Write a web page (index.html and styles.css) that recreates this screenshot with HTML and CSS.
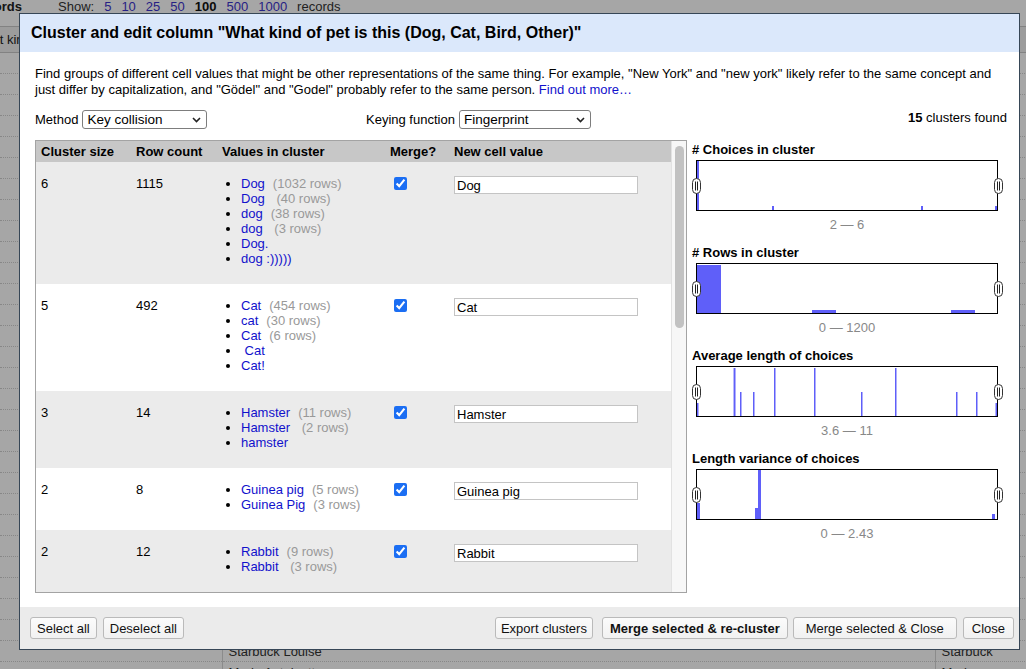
FILE: index.html
```html
<!DOCTYPE html>
<html lang="en">
<head>
<meta charset="utf-8">
<title>Cluster and edit column</title>
<link rel="stylesheet" href="styles.css">
</head>
<body>
<div class="page">
  <div class="viewbar">
    <div class="rec-count"><span>1115 records</span></div>
    <div class="show">
      <span>Show:</span><a>5</a><a>10</a><a>25</a><a>50</a><b>100</b><a>500</a><a>1000</a><span>records</span>
    </div>
  </div>
  <table class="data">
    <colgroup><col class="dc1"><col class="dc2"><col class="dc3"></colgroup>
    <thead>
      <tr><th class="first"><span>What kind of pet is this (Dog, Cat, Bird, Other)</span></th><th>Name of owner</th><th>Dad</th></tr>
    </thead>
    <tbody>
      <tr><td></td><td></td><td></td></tr>
      <tr><td></td><td></td><td></td></tr>
      <tr><td></td><td></td><td></td></tr>
      <tr><td></td><td></td><td></td></tr>
      <tr><td></td><td></td><td></td></tr>
      <tr><td></td><td></td><td></td></tr>
      <tr><td></td><td></td><td></td></tr>
      <tr><td></td><td></td><td></td></tr>
      <tr><td></td><td></td><td></td></tr>
      <tr><td></td><td></td><td></td></tr>
      <tr><td></td><td></td><td></td></tr>
      <tr><td></td><td></td><td></td></tr>
      <tr><td></td><td></td><td></td></tr>
      <tr><td></td><td></td><td></td></tr>
      <tr><td></td><td></td><td></td></tr>
      <tr><td></td><td></td><td></td></tr>
      <tr><td></td><td></td><td></td></tr>
      <tr><td></td><td></td><td></td></tr>
      <tr><td></td><td></td><td></td></tr>
      <tr><td></td><td></td><td></td></tr>
      <tr><td></td><td></td><td></td></tr>
      <tr><td></td><td></td><td></td></tr>
      <tr><td></td><td></td><td></td></tr>
      <tr><td></td><td></td><td></td></tr>
      <tr><td></td><td></td><td></td></tr>
      <tr><td></td><td></td><td></td></tr>
      <tr><td></td><td></td><td></td></tr>
      <tr><td></td><td></td><td></td></tr>
      <tr><td></td><td>Starbuck Louise</td><td>Starbuck</td></tr>
      <tr><td></td><td>Marie Antoinette</td><td>Marie</td></tr>
    </tbody>
  </table>
</div>

<div class="overlay"></div>

<div class="dialog">
  <div class="dialog-header">Cluster and edit column "What kind of pet is this (Dog, Cat, Bird, Other)"</div>

  <div class="dialog-body">
    <p class="desc">Find groups of different cell values that might be other representations of the same thing. For example, "New York" and "new york" likely refer to the same concept and just differ by capitalization, and "Gödel" and "Godel" probably refer to the same person. <a class="link">Find out more…</a></p>

    <div class="controls">
      <div class="ctl">
        <span>Method</span>
        <span class="select-wrap sel-method">
          <select><option>Key collision</option><option>Nearest neighbor</option></select>
          <svg class="chev" width="9" height="6" viewBox="0 0 9 6"><path d="M1 1 L4.5 4.5 L8 1" fill="none" stroke="#222" stroke-width="1.6"/></svg>
        </span>
      </div>
      <div class="ctl">
        <span>Keying function</span>
        <span class="select-wrap sel-key">
          <select><option>Fingerprint</option><option>ngram-fingerprint</option></select>
          <svg class="chev" width="9" height="6" viewBox="0 0 9 6"><path d="M1 1 L4.5 4.5 L8 1" fill="none" stroke="#222" stroke-width="1.6"/></svg>
        </span>
      </div>
      <div class="found"><b>15</b> clusters found</div>
    </div>

    <div class="main">
      <div class="table-wrap">
        <div class="cluster-scroll">
          <table class="clusters">
            <colgroup><col class="k1"><col class="k2"><col class="k3"><col class="k4"><col class="k5"></colgroup>
            <thead>
              <tr><th>Cluster size</th><th>Row count</th><th>Values in cluster</th><th>Merge?</th><th>New cell value</th></tr>
            </thead>
            <tbody>
              <tr class="odd">
                <td>6</td><td>1115</td>
                <td><ul class="values">
                  <li><a>Dog</a><span class="cnt">(1032 rows)</span></li>
                  <li><a>Dog </a><span class="cnt">(40 rows)</span></li>
                  <li><a>dog</a><span class="cnt">(38 rows)</span></li>
                  <li><a>dog </a><span class="cnt">(3 rows)</span></li>
                  <li><a>Dog.</a></li>
                  <li><a>dog :)))))</a></li>
                </ul></td>
                <td><input type="checkbox" class="chk" checked></td>
                <td><input type="text" class="newval" value="Dog"></td>
              </tr>
              <tr>
                <td>5</td><td>492</td>
                <td><ul class="values">
                  <li><a>Cat</a><span class="cnt">(454 rows)</span></li>
                  <li><a>cat</a><span class="cnt">(30 rows)</span></li>
                  <li><a>Cat</a><span class="cnt">(6 rows)</span></li>
                  <li><a> Cat</a></li>
                  <li><a>Cat!</a></li>
                </ul></td>
                <td><input type="checkbox" class="chk" checked></td>
                <td><input type="text" class="newval" value="Cat"></td>
              </tr>
              <tr class="odd">
                <td>3</td><td>14</td>
                <td><ul class="values">
                  <li><a>Hamster</a><span class="cnt">(11 rows)</span></li>
                  <li><a>Hamster </a><span class="cnt">(2 rows)</span></li>
                  <li><a>hamster</a></li>
                </ul></td>
                <td><input type="checkbox" class="chk" checked></td>
                <td><input type="text" class="newval" value="Hamster"></td>
              </tr>
              <tr>
                <td>2</td><td>8</td>
                <td><ul class="values">
                  <li><a>Guinea pig</a><span class="cnt">(5 rows)</span></li>
                  <li><a>Guinea Pig</a><span class="cnt">(3 rows)</span></li>
                </ul></td>
                <td><input type="checkbox" class="chk" checked></td>
                <td><input type="text" class="newval" value="Guinea pig"></td>
              </tr>
              <tr class="odd">
                <td>2</td><td>12</td>
                <td><ul class="values">
                  <li><a>Rabbit</a><span class="cnt">(9 rows)</span></li>
                  <li><a>Rabbit </a><span class="cnt">(3 rows)</span></li>
                </ul></td>
                <td><input type="checkbox" class="chk" checked></td>
                <td><input type="text" class="newval" value="Rabbit"></td>
              </tr>
              <tr>
                <td>2</td><td>7</td>
                <td><ul class="values">
                  <li><a>Bird</a><span class="cnt">(5 rows)</span></li>
                  <li><a>bird</a><span class="cnt">(2 rows)</span></li>
                </ul></td>
                <td><input type="checkbox" class="chk" checked></td>
                <td><input type="text" class="newval" value="Bird"></td>
              </tr>
              <tr class="odd">
                <td>2</td><td>4</td>
                <td><ul class="values">
                  <li><a>Fish</a><span class="cnt">(3 rows)</span></li>
                  <li><a>fish</a><span class="cnt">(1 rows)</span></li>
                </ul></td>
                <td><input type="checkbox" class="chk" checked></td>
                <td><input type="text" class="newval" value="Fish"></td>
              </tr>
              <tr>
                <td>2</td><td>3</td>
                <td><ul class="values">
                  <li><a>Turtle</a><span class="cnt">(2 rows)</span></li>
                  <li><a>turtle</a><span class="cnt">(1 rows)</span></li>
                </ul></td>
                <td><input type="checkbox" class="chk" checked></td>
                <td><input type="text" class="newval" value="Turtle"></td>
              </tr>
            </tbody>
          </table>
        </div>
        <div class="vscroll"><div class="vthumb"></div></div>
      </div>

      <div class="facets">
        <div class="facet">
          <div class="facet-title"># Choices in cluster</div>
          <div class="hist">
            <svg class="bars" width="300" height="49" viewBox="0 0 300 49">
              <rect x="0" y="0" width="2" height="49"/>
              <rect x="75" y="45" width="2" height="4"/>
              <rect x="224" y="45" width="2" height="4"/>
              <rect x="298" y="45" width="2" height="4"/>
            </svg>
            <span class="handle hl"><svg width="9" height="16" viewBox="0 0 9 16"><rect x="0.5" y="0.5" width="8" height="15" rx="4" fill="#fff" stroke="#333"/><path d="M3.5 3.5V12.5M5.5 3.5V12.5" stroke="#222"/></svg></span>
            <span class="handle hr"><svg width="9" height="16" viewBox="0 0 9 16"><rect x="0.5" y="0.5" width="8" height="15" rx="4" fill="#fff" stroke="#333"/><path d="M3.5 3.5V12.5M5.5 3.5V12.5" stroke="#222"/></svg></span>
          </div>
          <div class="range">2 — 6</div>
        </div>

        <div class="facet">
          <div class="facet-title"># Rows in cluster</div>
          <div class="hist">
            <svg class="bars" width="300" height="49" viewBox="0 0 300 49">
              <rect x="0" y="1" width="24" height="48"/>
              <rect x="115" y="46" width="24" height="3"/>
              <rect x="254" y="46" width="24" height="3"/>
            </svg>
            <span class="handle hl"><svg width="9" height="16" viewBox="0 0 9 16"><rect x="0.5" y="0.5" width="8" height="15" rx="4" fill="#fff" stroke="#333"/><path d="M3.5 3.5V12.5M5.5 3.5V12.5" stroke="#222"/></svg></span>
            <span class="handle hr"><svg width="9" height="16" viewBox="0 0 9 16"><rect x="0.5" y="0.5" width="8" height="15" rx="4" fill="#fff" stroke="#333"/><path d="M3.5 3.5V12.5M5.5 3.5V12.5" stroke="#222"/></svg></span>
          </div>
          <div class="range">0 — 1200</div>
        </div>

        <div class="facet">
          <div class="facet-title">Average length of choices</div>
          <div class="hist">
            <svg class="bars" width="300" height="49" viewBox="0 0 300 49">
              <rect x="0" y="36" width="1.5" height="13"/>
              <rect x="36" y="1" width="1" height="48" class="pale"/>
              <rect x="37" y="1" width="1.5" height="48"/>
              <rect x="43" y="25" width="1.5" height="24"/>
              <rect x="56" y="25" width="1.5" height="24"/>
              <rect x="77" y="1" width="1.5" height="48"/>
              <rect x="117" y="1" width="1.5" height="48"/>
              <rect x="164" y="25" width="1.5" height="24"/>
              <rect x="198" y="1" width="1.5" height="48"/>
              <rect x="259" y="25" width="1.5" height="24"/>
              <rect x="279" y="25" width="1.5" height="24"/>
              <rect x="298.5" y="36" width="1.5" height="13"/>
            </svg>
            <span class="handle hl"><svg width="9" height="16" viewBox="0 0 9 16"><rect x="0.5" y="0.5" width="8" height="15" rx="4" fill="#fff" stroke="#333"/><path d="M3.5 3.5V12.5M5.5 3.5V12.5" stroke="#222"/></svg></span>
            <span class="handle hr"><svg width="9" height="16" viewBox="0 0 9 16"><rect x="0.5" y="0.5" width="8" height="15" rx="4" fill="#fff" stroke="#333"/><path d="M3.5 3.5V12.5M5.5 3.5V12.5" stroke="#222"/></svg></span>
          </div>
          <div class="range">3.6 — 11</div>
        </div>

        <div class="facet">
          <div class="facet-title">Length variance of choices</div>
          <div class="hist">
            <svg class="bars" width="300" height="49" viewBox="0 0 300 49">
              <rect x="0" y="33" width="3" height="16"/>
              <rect x="58" y="38" width="3" height="11"/>
              <rect x="61" y="0" width="3" height="49"/>
              <rect x="295" y="44" width="3" height="5"/>
            </svg>
            <span class="handle hl"><svg width="9" height="16" viewBox="0 0 9 16"><rect x="0.5" y="0.5" width="8" height="15" rx="4" fill="#fff" stroke="#333"/><path d="M3.5 3.5V12.5M5.5 3.5V12.5" stroke="#222"/></svg></span>
            <span class="handle hr"><svg width="9" height="16" viewBox="0 0 9 16"><rect x="0.5" y="0.5" width="8" height="15" rx="4" fill="#fff" stroke="#333"/><path d="M3.5 3.5V12.5M5.5 3.5V12.5" stroke="#222"/></svg></span>
          </div>
          <div class="range">0 — 2.43</div>
        </div>
      </div>
    </div>
  </div>

  <div class="dialog-footer">
    <div class="btn-group">
      <button class="btn">Select all</button>
      <button class="btn">Deselect all</button>
    </div>
    <div class="btn-group right">
      <button class="btn export">Export clusters</button>
      <button class="btn strong">Merge selected &amp; re-cluster</button>
      <button class="btn wide">Merge selected &amp; Close</button>
      <button class="btn close">Close</button>
    </div>
  </div>
</div>
</body>
</html>
```

FILE: styles.css
```css
* { box-sizing: border-box; }

html, body {
  margin: 0;
  padding: 0;
}

body {
  width: 1026px;
  height: 669px;
  overflow: hidden;
  position: relative;
  background: #fff;
  color: #222;
  font-family: "Liberation Sans", Arial, Helvetica, sans-serif;
  font-size: 13px;
}

/* ---------- background page ---------- */
.page {
  width: 1026px;
  overflow: hidden;
}

.viewbar {
  display: flex;
  height: 26px;
  line-height: 13px;
  color: #333;
}

.rec-count {
  width: 22px;
  overflow: hidden;
  display: flex;
  justify-content: flex-end;
  white-space: nowrap;
  font-weight: bold;
  color: #222;
}

.show {
  display: flex;
  gap: 10px;
  margin-left: 36px;
  white-space: nowrap;
}

.show a { color: #3b33cc; }
.show b { color: #111; }

.data {
  border-collapse: collapse;
  table-layout: fixed;
  width: 1135px;
}

.dc1 { width: 222px; }
.dc2 { width: 713px; }
.dc3 { width: 200px; }

.data th {
  height: 26px;
  background: #f0f0f0;
  border-bottom: 1px solid #c8c8c8;
  border-top: 1px solid #c8c8c8;
  font-weight: normal;
  text-align: left;
  padding: 0 6px;
  white-space: nowrap;
  overflow: hidden;
  color: #222;
}

.data th.first {
  padding: 0;
  text-indent: -27px;
}

.data td {
  height: 21px;
  padding: 0 6px;
  border-bottom: 1px dotted #cfcfcf;
  white-space: nowrap;
  overflow: hidden;
  color: #333;
}

.data td + td,
.data th + th {
  border-left: 1px solid #d6d6d6;
}

.overlay {
  position: fixed;
  inset: 0;
  background: rgba(0, 0, 0, 0.35);
}

/* ---------- dialog ---------- */
.dialog {
  position: absolute;
  left: 19px;
  top: 13px;
  width: 1001px;
  height: 637px;
  border: 1px solid #364656;
  background: #fff;
  display: flex;
  flex-direction: column;
  color: #000;
}

.dialog-header {
  height: 38px;
  flex: none;
  background: #dbe8fb;
  padding: 0 11px;
  display: flex;
  align-items: center;
  font-size: 16px;
  font-weight: bold;
  color: #000;
  white-space: nowrap;
}

.dialog-body {
  flex: 1;
  padding: 14px 12px 14px 15px;
  display: flex;
  flex-direction: column;
  min-height: 0;
}

.desc {
  margin: 0;
  line-height: 16px;
  color: #000;
}

.link {
  color: #11c;
  text-decoration: none;
}

.controls {
  margin-top: 12px;
  display: grid;
  grid-template-columns: 331px 1fr auto;
  align-items: center;
  height: 19px;
}

.ctl {
  display: flex;
  align-items: center;
  gap: 4px;
}

.select-wrap {
  position: relative;
  display: inline-flex;
}

.select-wrap select {
  appearance: none;
  -webkit-appearance: none;
  height: 19px;
  border: 1px solid #7d7d7d;
  border-radius: 3px;
  background: #fff;
  font-family: "Liberation Sans", Arial, sans-serif;
  font-size: 13.5px;
  color: #000;
  padding: 0 0 0 4px;
  margin: 0;
  line-height: 17px;
}

.sel-method select { width: 125px; }
.sel-key select { width: 132px; }

.chev {
  position: absolute;
  right: 6px;
  top: 7px;
  pointer-events: none;
}

.found {
  align-self: start;
  line-height: 15px;
  white-space: nowrap;
  color: #000;
}

.main {
  margin-top: 11px;
  height: 453px;
  display: grid;
  grid-template-columns: 652px 1fr;
  column-gap: 5px;
}

.table-wrap {
  border: 1px solid #a3a3a3;
  height: 453px;
  display: flex;
}

.cluster-scroll {
  flex: 1;
  min-width: 0;
  height: 451px;
  overflow: hidden;
}

.vscroll {
  flex: none;
  width: 15px;
  height: 451px;
  background: #f7f7f7;
  border-left: 1px solid #e2e2e2;
  padding: 5px 2px 0 3px;
}

.vthumb {
  width: 9px;
  height: 182px;
  border-radius: 5px;
  background: #c2c2c2;
}

.clusters {
  width: 100%;
  border-collapse: collapse;
  table-layout: fixed;
}

.k1 { width: 95px; }
.k2 { width: 86px; }
.k3 { width: 168px; }
.k4 { width: 64px; }

.clusters th {
  background: #c7c7c7;
  text-align: left;
  font-weight: bold;
  padding: 3px 5px;
  line-height: 15px;
  color: #000;
  white-space: nowrap;
}

.clusters td {
  vertical-align: top;
  padding: 14px 5px 18px 5px;
  line-height: 15px;
  color: #000;
  background: #fff;
}

.clusters tr.odd td {
  background: #ebebeb;
}

.values {
  margin: 0;
  padding-left: 19px;
  list-style: disc;
}

.values li {
  white-space: pre;
  line-height: 15px;
}

.values a {
  color: #11c;
  text-decoration: none;
}

.values .cnt {
  color: #999;
  margin-left: 8px;
}

.chk {
  display: block;
  width: 13px;
  height: 13px;
  margin: 1px 0 0 4px;
  accent-color: #1b6ef3;
}

.newval {
  display: block;
  width: 184px;
  height: 18px;
  margin: 0;
  border: 1px solid #c4c4c4;
  padding: 0 2px;
  font-family: "Liberation Sans", Arial, sans-serif;
  font-size: 13px;
  color: #000;
  background: #fff;
}

/* ---------- facets ---------- */
.facets {
  padding-top: 2px;
}

.facet {
  margin-bottom: 12px;
}

.facet-title {
  font-weight: bold;
  line-height: 16px;
  color: #000;
  white-space: nowrap;
}

.hist {
  position: relative;
  margin: 2px 0 0 4px;
  width: 302px;
  height: 51px;
  border: 1px solid #000;
  background: #fff;
}

.bars {
  display: block;
  fill: #5f5ff9;
}

.bars .pale { fill: #b9b9fb; }

.handle {
  position: absolute;
  top: 17px;
  width: 9px;
  height: 16px;
  display: block;
}

.handle svg { display: block; }

.hl { left: -5px; }
.hr { right: -6px; }

.range {
  margin: 6px 0 0 4px;
  width: 302px;
  text-align: center;
  color: #888;
  line-height: 16px;
}

/* ---------- footer ---------- */
.dialog-footer {
  height: 42px;
  flex: none;
  background: #ebebeb;
  display: flex;
  align-items: center;
  justify-content: space-between;
  padding: 0 5px 0 10px;
}

.btn-group {
  display: flex;
  gap: 6px;
}

.btn {
  height: 22px;
  padding: 0 6px;
  border: 1px solid #bababa;
  border-radius: 3px;
  background: linear-gradient(#fbfbfb, #f1f1f1);
  font-family: "Liberation Sans", Arial, sans-serif;
  font-size: 13px;
  color: #111;
  margin: 0;
}

.btn.export { padding: 0 5px; margin-right: 3px; }
.btn.strong { font-weight: bold; padding: 0 7px; }
.btn.wide { padding: 0 12px; margin-left: -1px; }
.btn.close { padding: 0 8px; }
```
